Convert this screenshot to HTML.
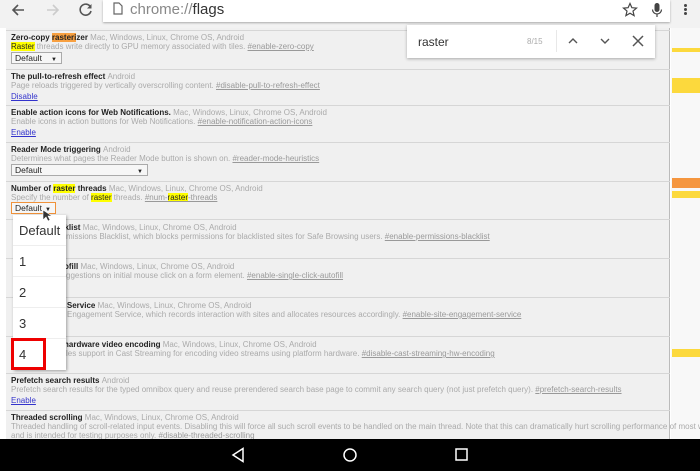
<!DOCTYPE html>
<html><head><style>
*{margin:0;padding:0;box-sizing:border-box}
body{width:700px;height:471px;overflow:hidden;background:#fff;font-family:"Liberation Sans",sans-serif;position:relative}
.a{position:absolute;white-space:nowrap}
.tb{left:0;top:0;width:700px;height:28px;background:#f2f2f2}
.omni{left:103px;top:0;width:567px;height:22px;background:#fff;box-shadow:0 1px 2px rgba(0,0,0,.3)}
.content{left:6px;top:28px;width:664px;height:411px;background:#f0f0f0;border-right:1px solid #bbb}
.side{left:671px;top:28px;width:29px;height:411px;background:#f8f8f8}
.sep{left:6px;width:664px;height:1px;background:#d6d6d6}
.t{left:11px;font-size:8px;color:#222;font-weight:bold}
.t span{color:#aaa;font-weight:normal}
.d{left:11px;font-size:8px;color:#aaa}
.d u{color:#999}
.l{left:11px;font-size:8px;color:#33c;text-decoration:underline}
.sel{left:11px;height:12px;border:1px solid #aaa;background:#f6f6f6;font-size:8.5px;padding-left:3px;line-height:10px;color:#222}
.sel i{position:absolute;right:4px;font-style:normal;font-size:6px;top:2px}
.y{background:#ff0}.o{background:#f8a040}
.nav{left:0;top:439px;width:700px;height:32px;background:#000}
.pop{left:13px;top:215px;width:53px;height:155px;background:#fff;box-shadow:1px 1px 3px rgba(0,0,0,.35)}
.pop div{height:31px;border-bottom:1px solid #eee;font-size:13px;color:#333;padding-left:6px;line-height:31px}
.find{left:407px;top:25px;width:248px;height:33px;background:#fff;box-shadow:0 1px 3px rgba(0,0,0,.3)}
</style></head><body>
<div class="a tb"></div>
<svg class="a" style="left:10px;top:3px" width="16" height="14"><path d="M14 7H3M8 2L3 7l5 5" stroke="#555" stroke-width="1.6" fill="none"/></svg>
<svg class="a" style="left:45px;top:3px" width="16" height="14"><path d="M2 7h11M8 2l5 5-5 5" stroke="#ccc" stroke-width="1.6" fill="none"/></svg>
<svg class="a" style="left:78px;top:2px" width="16" height="16"><path d="M12.5 5A5.5 5.5 0 1 0 13 9" stroke="#555" stroke-width="1.6" fill="none"/><path d="M13.5 2v4.5H9z" fill="#555"/></svg>
<div class="a omni"></div>
<svg class="a" style="left:113px;top:2px" width="10" height="13"><path d="M1 1h5l3 3v8H1z" stroke="#666" stroke-width="1.2" fill="none"/></svg>
<div class="a" style="left:130px;top:0;font-size:15px;color:#888;line-height:20px">chrome://<span style="color:#333">flags</span></div>
<svg class="a" style="left:622px;top:2px" width="16" height="16"><path d="M8 1.5l1.9 4.2 4.6.4-3.5 3 1.1 4.5L8 11.2l-4.1 2.4 1.1-4.5-3.5-3 4.6-.4z" stroke="#444" stroke-width="1.2" fill="none"/></svg>
<svg class="a" style="left:651px;top:2px" width="12" height="17"><rect x="3.5" y="1" width="5" height="9" rx="2.5" fill="#444"/><path d="M1.5 7.5a4.5 4.5 0 0 0 9 0M6 12v3" stroke="#444" stroke-width="1.2" fill="none"/></svg>
<div class="a" style="left:684px;top:4px;width:3px;height:3px;background:#444;border-radius:50%;box-shadow:0 4px #444,0 8px #444"></div>
<div class="a content"></div>
<div class="a side"></div>
<div class="a" style="left:672px;top:48px;width:28px;height:4px;background:#fcd93d"></div>
<div class="a" style="left:672px;top:78px;width:28px;height:15px;background:#fcd93d"></div>
<div class="a" style="left:672px;top:178px;width:28px;height:10px;background:#f5963f"></div>
<div class="a" style="left:672px;top:191px;width:28px;height:7px;background:#fcd93d"></div>
<div class="a" style="left:672px;top:349px;width:28px;height:8px;background:#fcd93d"></div>

<div class="a sep" style="top:30px"></div>
<div class="a t" style="top:33px">Zero-copy <span class="o" style="color:#222;font-weight:bold">rasteri</span>zer <span>Mac, Windows, Linux, Chrome OS, Android</span></div>
<div class="a d" style="top:42px"><span class="y" style="color:#222">Raster</span> threads write directly to GPU memory associated with tiles. <u>#enable-zero-copy</u></div>
<div class="a sel" style="top:52px;width:51px">Default<i>▼</i></div>

<div class="a sep" style="top:69px"></div>
<div class="a t" style="top:72px">The pull-to-refresh effect <span>Android</span></div>
<div class="a d" style="top:81px">Page reloads triggered by vertically overscrolling content. <u>#disable-pull-to-refresh-effect</u></div>
<div class="a l" style="top:92px">Disable</div>

<div class="a sep" style="top:105px"></div>
<div class="a t" style="top:108px">Enable action icons for Web Notifications. <span>Mac, Windows, Linux, Chrome OS, Android</span></div>
<div class="a d" style="top:117px">Enable icons in action buttons for Web Notifications. <u>#enable-notification-action-icons</u></div>
<div class="a l" style="top:128px">Enable</div>

<div class="a sep" style="top:142px"></div>
<div class="a t" style="top:145px">Reader Mode triggering <span>Android</span></div>
<div class="a d" style="top:154px">Determines what pages the Reader Mode button is shown on. <u>#reader-mode-heuristics</u></div>
<div class="a sel" style="top:164px;width:137px">Default<i>▼</i></div>

<div class="a sep" style="top:181px"></div>
<div class="a t" style="top:184px">Number of <span class="y" style="color:#222;font-weight:bold">raster</span> threads <span>Mac, Windows, Linux, Chrome OS, Android</span></div>
<div class="a d" style="top:193px">Specify the number of <span class="y" style="color:#222">raster</span> threads. <u>#num-<span class="y" style="color:#222">raster</span>-threads</u></div>
<div class="a sel" style="top:202px;width:45px;border-color:#f0923a">Default<i>▼</i></div>

<div class="a sep" style="top:219px"></div>
<div class="a t" style="top:223px;left:60px">cklist <span>Mac, Windows, Linux, Chrome OS, Android</span></div>
<div class="a d" style="top:232px;left:66px">missions Blacklist, which blocks permissions for blacklisted sites for Safe Browsing users. <u>#enable-permissions-blacklist</u></div>

<div class="a sep" style="top:258px"></div>
<div class="a t" style="top:262px;left:64px">ofill <span>Mac, Windows, Linux, Chrome OS, Android</span></div>
<div class="a d" style="top:271px;left:66px">ggestions on initial mouse click on a form element. <u>#enable-single-click-autofill</u></div>

<div class="a sep" style="top:297px"></div>
<div class="a t" style="top:301px;left:62px">t Service <span>Mac, Windows, Linux, Chrome OS, Android</span></div>
<div class="a d" style="top:310px;left:67px">Engagement Service, which records interaction with sites and allocates resources accordingly. <u>#enable-site-engagement-service</u></div>

<div class="a sep" style="top:336px"></div>
<div class="a t" style="top:340px;left:64px">hardware video encoding <span>Mac, Windows, Linux, Chrome OS, Android</span></div>
<div class="a d" style="top:349px;left:66px">les support in Cast Streaming for encoding video streams using platform hardware. <u>#disable-cast-streaming-hw-encoding</u></div>

<div class="a sep" style="top:373px"></div>
<div class="a t" style="top:376px">Prefetch search results <span>Android</span></div>
<div class="a d" style="top:385px">Prefetch search results for the typed omnibox query and reuse prerendered search base page to commit any search query (not just prefetch query). <u>#prefetch-search-results</u></div>
<div class="a l" style="top:396px">Enable</div>

<div class="a sep" style="top:410px"></div>
<div class="a t" style="top:413px">Threaded scrolling <span>Mac, Windows, Linux, Chrome OS, Android</span></div>
<div class="a d" style="top:422px">Threaded handling of scroll-related input events. Disabling this will force all such scroll events to be handled on the main thread. Note that this can dramatically hurt scrolling performance of most websites</div>
<div class="a d" style="top:431px">and is intended for testing purposes only. <u>#disable-threaded-scrolling</u></div>

<div class="a pop"><div>Default</div><div>1</div><div>2</div><div>3</div><div style="border:none">4</div></div>
<div class="a" style="left:11px;top:338px;width:35px;height:32px;border:3px solid #e00"></div>
<svg class="a" style="left:42px;top:209px" width="10" height="14"><path d="M1 1v10l3-3 2 4 2-1-2-4h4z" fill="#333" stroke="#fff" stroke-width=".6"/></svg>

<div class="a find"></div>
<div class="a" style="left:418px;top:35px;font-size:12px;color:#333">raster</div>
<div class="a" style="left:527px;top:37px;font-size:8px;color:#aaa">8/15</div>
<div class="a" style="left:556px;top:30px;width:1px;height:22px;background:#e8e8e8"></div>
<svg class="a" style="left:567px;top:36px" width="12" height="10"><path d="M2 7l4-4 4 4" stroke="#555" stroke-width="1.4" fill="none"/></svg>
<svg class="a" style="left:599px;top:36px" width="12" height="10"><path d="M2 3l4 4 4-4" stroke="#555" stroke-width="1.4" fill="none"/></svg>
<svg class="a" style="left:632px;top:35px" width="12" height="12"><path d="M1 1l10 10M11 1L1 11" stroke="#555" stroke-width="1.5"/></svg>

<div class="a nav"></div>
<svg class="a" style="left:231px;top:447px" width="14" height="16"><path d="M12 1.5L2 8l10 6.5z" stroke="#fff" stroke-width="1.5" fill="none"/></svg>
<svg class="a" style="left:342px;top:447px" width="16" height="16"><circle cx="8" cy="8" r="6" stroke="#fff" stroke-width="1.5" fill="none"/></svg>
<svg class="a" style="left:455px;top:448px" width="14" height="14"><rect x="1" y="1" width="11" height="11" stroke="#fff" stroke-width="1.5" fill="none"/></svg>
</body></html>
